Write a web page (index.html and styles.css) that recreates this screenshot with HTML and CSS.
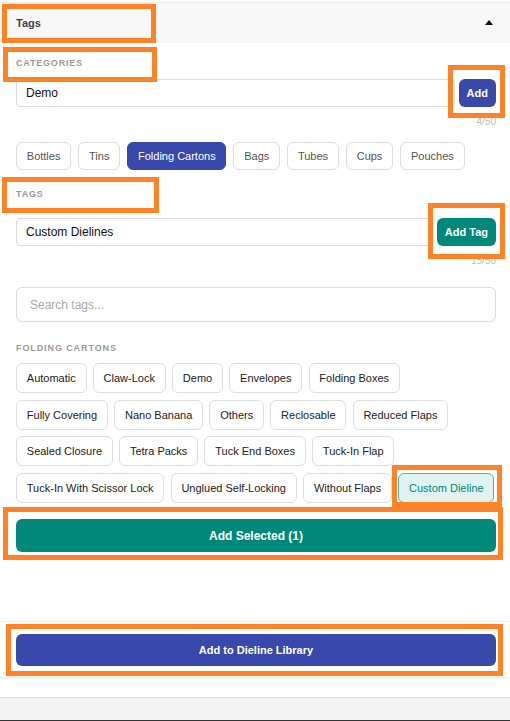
FILE: index.html
```html
<!DOCTYPE html>
<html lang="en">
<head>
    <meta charset="UTF-8">
    <title>Tags</title>
    <link rel="stylesheet" href="styles.css">
</head>
<body>
    <div class="page">
        <div class="panel">
            <!-- Collapsible section header -->
            <div class="panel-header">
                <span class="panel-title">Tags</span>
                <span class="caret-up"></span>
            </div>

            <div class="panel-body">
                <div class="section-label label-categories">Categories</div>
                <div class="input-row">
                    <input class="text-input" type="text" value="Demo">
                    <button class="btn btn-indigo btn-small">Add</button>
                </div>
                <div class="counter">4/50</div>

                <div class="chip-list category-chips">
                    <button class="chip">Bottles</button>
                    <button class="chip">Tins</button>
                    <button class="chip chip-active">Folding Cartons</button>
                    <button class="chip">Bags</button>
                    <button class="chip">Tubes</button>
                    <button class="chip">Cups</button>
                    <button class="chip">Pouches</button>
                </div>

                <div class="section-label label-tags">Tags</div>
                <div class="input-row">
                    <input class="text-input" type="text" value="Custom Dielines">
                    <button class="btn btn-teal btn-small">Add Tag</button>
                </div>
                <div class="counter">15/50</div>

                <input class="search-input" type="text" placeholder="Search tags...">

                <div class="section-label label-group">Folding Cartons</div>
                <div class="tag-grid">
                    <div class="tag-row">
                        <button class="tag">Automatic</button>
                        <button class="tag">Claw-Lock</button>
                        <button class="tag">Demo</button>
                        <button class="tag">Envelopes</button>
                        <button class="tag">Folding Boxes</button>
                    </div>
                    <div class="tag-row">
                        <button class="tag">Fully Covering</button>
                        <button class="tag">Nano Banana</button>
                        <button class="tag">Others</button>
                        <button class="tag">Reclosable</button>
                        <button class="tag">Reduced Flaps</button>
                    </div>
                    <div class="tag-row">
                        <button class="tag">Sealed Closure</button>
                        <button class="tag">Tetra Packs</button>
                        <button class="tag">Tuck End Boxes</button>
                        <button class="tag">Tuck-In Flap</button>
                    </div>
                    <div class="tag-row">
                        <button class="tag">Tuck-In With Scissor Lock</button>
                        <button class="tag">Unglued Self-Locking</button>
                        <button class="tag">Without Flaps</button>
                        <button class="tag tag-selected">Custom Dieline</button>
                    </div>
                </div>

                <button class="btn btn-teal btn-wide">Add Selected (1)</button>
            </div>

            <div class="panel-footer">
                <button class="btn btn-indigo btn-footer">Add to Dieline Library</button>
            </div>
        </div>

        <div class="bottom-bar"></div>

        <!-- highlight frames -->
        <div class="mark mark-header"></div>
        <div class="mark mark-categories"></div>
        <div class="mark mark-add"></div>
        <div class="mark mark-tags"></div>
        <div class="mark mark-addtag"></div>
        <div class="mark mark-custom"></div>
        <div class="mark mark-selected"></div>
        <div class="mark mark-footer"></div>
    </div>
</body>
</html>
```

FILE: styles.css
```css
* {
    box-sizing: border-box;
}

body {
    margin: 0;
    font-family: "Liberation Sans", Arial, sans-serif;
    background-color: #fff;
}

.page {
    position: relative;
    width: 510px;
    height: 721px;
    padding-top: 2px;
    overflow: hidden;
    display: flex;
    flex-direction: column;
}

.panel {
    flex: 1;
    display: flex;
    flex-direction: column;
    border-top: 1px solid #ececec;
}

.panel-header {
    height: 40px;
    flex-shrink: 0;
    padding: 0 17px 0 16px;
    background-color: #f8f8f8;
    display: flex;
    align-items: center;
    justify-content: space-between;
}

.panel-title {
    font-size: 11px;
    font-weight: bold;
    color: #444;
}

.caret-up {
    width: 0;
    height: 0;
    border-left: 4.5px solid transparent;
    border-right: 4.5px solid transparent;
    border-bottom: 5px solid #111;
    margin-bottom: 1px;
}

.panel-body {
    flex: 1;
    padding: 0 14px 0 16px;
}

.section-label {
    font-size: 9px;
    line-height: 11px;
    font-weight: bold;
    color: #9a9a9a;
    text-transform: uppercase;
    letter-spacing: 0.8px;
}

.label-categories {
    margin-top: 15px;
    margin-bottom: 10px;
}

.label-tags {
    margin-top: 19px;
    margin-bottom: 18px;
}

.label-group {
    margin-top: 21px;
    margin-bottom: 9px;
    letter-spacing: 0.9px;
}

.input-row {
    display: flex;
    gap: 4px;
}

.text-input {
    flex: 1;
    height: 28px;
    padding: 0 9px;
    border: 1px solid #dcdcdc;
    border-radius: 4px;
    font-family: inherit;
    font-size: 12px;
    color: #111;
    outline: none;
}

.counter {
    text-align: right;
    font-size: 10px;
    line-height: 12px;
    color: #bdbdbd;
    margin-top: 9px;
}

.btn {
    border: none;
    color: #fff;
    font-family: inherit;
    font-weight: bold;
    cursor: pointer;
}

.btn-indigo {
    background-color: #3949ab;
}

.btn-teal {
    background-color: #00897b;
}

.btn-small {
    height: 28px;
    padding: 0 8px;
    border-radius: 6px;
    font-size: 11px;
}

.btn-wide {
    display: block;
    width: 100%;
    height: 33px;
    margin-top: 16px;
    border-radius: 6px;
    font-size: 12px;
}

.chip-list {
    display: flex;
    flex-wrap: wrap;
}

.category-chips {
    gap: 7px;
    margin-top: 14px;
}

.chip {
    height: 28px;
    padding: 0 9.8px;
    border: 1px solid #dedede;
    border-radius: 6px;
    background-color: #fff;
    font-family: inherit;
    font-size: 11px;
    color: #555;
}

.chip-active {
    background-color: #3949ab;
    border-color: #3949ab;
    color: #fff;
}

.search-input {
    display: block;
    width: 100%;
    height: 35px;
    margin-top: 20px;
    padding: 0 13px;
    border: 1px solid #dcdcdc;
    border-radius: 6px;
    font-family: inherit;
    font-size: 12px;
    outline: none;
}

.search-input::placeholder {
    color: #aaa;
}

.tag-grid {
    display: flex;
    flex-direction: column;
    gap: 6.7px;
}

.tag-row {
    display: flex;
    gap: 6.3px;
}

.tag {
    height: 30px;
    padding: 0 9.8px;
    border: 1px solid #dedede;
    border-radius: 6px;
    background-color: #fff;
    font-family: inherit;
    font-size: 11px;
    color: #222;
    white-space: nowrap;
}

.tag-selected {
    background-color: #e0f2f1;
    border-color: #4db6ac;
    color: #00897b;
}

.panel-footer {
    flex-shrink: 0;
    border-top: 1px solid #f0f0f0;
    padding: 12px 14px 11px 16px;
    box-shadow: 0 2px 3px rgba(0, 0, 0, 0.08);
}

.btn-footer {
    display: block;
    width: 100%;
    height: 32px;
    border-radius: 6px;
    font-size: 11px;
}

.bottom-bar {
    flex-shrink: 0;
    margin-top: 20px;
    height: 24px;
    background-color: #f4f4f4;
    border-top: 1px solid #dcdcdc;
    border-bottom: 1px solid #333;
}

/* annotation frames drawn on top of the panel */
.mark {
    position: absolute;
    border: 5px solid #ff8326;
    pointer-events: none;
}

.mark-header { left: 2px; top: 4px; width: 154px; height: 39px; }
.mark-categories { left: 3px; top: 47px; width: 154px; height: 35px; }
.mark-add { left: 448px; top: 65px; width: 57px; height: 53px; }
.mark-tags { left: 2px; top: 177px; width: 157px; height: 36px; }
.mark-addtag { left: 428px; top: 203px; width: 77px; height: 56px; }
.mark-custom { left: 392px; top: 465px; width: 110px; height: 42px; }
.mark-selected { left: 3px; top: 507px; width: 500px; height: 53px; }
.mark-footer { left: 6px; top: 624px; width: 497px; height: 52px; }
```
